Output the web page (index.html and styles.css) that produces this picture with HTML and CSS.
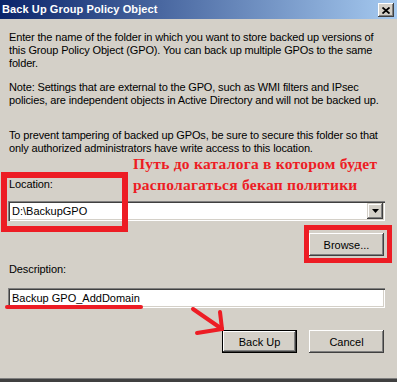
FILE: index.html
```html
<!DOCTYPE html>
<html>
<head>
<meta charset="utf-8">
<link rel="stylesheet" href="styles.css">
</head>
<body>
<div class="window">
  <div class="titlebar">
    <span class="title">Back Up Group Policy Object</span>
    <span class="close"><svg width="8" height="7" viewBox="0 0 8 7"><path d="M0.5 0.5 L7.5 6.5 M7.5 0.5 L0.5 6.5" stroke="#000" stroke-width="1.8" fill="none"/></svg></span>
  </div>
  <div class="content">
    <p class="para p1">Enter the name of the folder in which you want to store backed up versions of<br>this Group Policy Object (GPO). You can back up multiple GPOs to the same<br>folder.</p>
    <p class="para p2">Note: Settings that are external to the GPO, such as WMI filters and IPsec<br>policies, are independent objects in Active Directory and will not be backed up.</p>
    <p class="para p3">To prevent tampering of backed up GPOs, be sure to secure this folder so that<br>only authorized administrators have write access to this location.</p>
    <div class="label loc-label">Location:</div>
    <div class="field combo">
      <span class="field-text">D:\BackupGPO</span>
      <span class="drop"><svg width="7" height="4" viewBox="0 0 7 4"><path d="M0 0 H7 L3.5 4 Z" fill="#000"/></svg></span>
    </div>
    <div class="row browse-row"><button class="btn">Browse...</button></div>
    <div class="label desc-label">Description:</div>
    <div class="field desc"><span class="field-text">Backup GPO_AddDomain</span></div>
    <div class="row bottom-row">
      <button class="btn default">Back Up</button>
      <button class="btn">Cancel</button>
    </div>
  </div>

  <div class="note">Путь до каталога в котором будет<br>располагаться бекап политики</div>
  <div class="mark mark-location"></div>
  <div class="mark mark-browse"></div>
  <div class="underline"></div>
  <svg class="arrow" width="397" height="382" viewBox="0 0 397 382">
    <g stroke="#ed1c24" stroke-width="4" stroke-linecap="round" fill="none">
      <path d="M193 309 L222 329"/>
      <path d="M220 312 L222 329"/>
      <path d="M197 333 L222 329"/>
    </g>
  </svg>
</div>
</body>
</html>
```

FILE: styles.css
```css
* { box-sizing: border-box; }
html, body { margin: 0; padding: 0; }
body {
  width: 397px;
  height: 382px;
  overflow: hidden;
  background: #d4d0c8;
  font-family: "Liberation Sans", Arial, sans-serif;
  font-size: 11px;
  color: #000;
}
.window {
  position: relative;
  width: 397px;
  height: 382px;
  background: #d4d0c8;
  box-shadow: inset 0 -3px #404040, inset 0 -4px #808080;
}
.titlebar {
  height: 19px;
  display: flex;
  align-items: center;
  justify-content: space-between;
  padding: 0 3px 0 2px;
  background: linear-gradient(to right, #0a246a 0%, #a6caf0 100%);
}
.title {
  color: #fff;
  font-weight: bold;
  font-size: 11px;
  line-height: 19px;
  letter-spacing: 0.1px;
}
.close {
  width: 16px;
  height: 14px;
  margin-top: 1px;
  display: flex;
  align-items: center;
  justify-content: center;
  background: #d4d0c8;
  box-shadow: inset -1px -1px #404040, inset 1px 1px #fff, inset -2px -2px #808080;
}
.content {
  padding: 12px 12px 0 8px;
  display: flex;
  flex-direction: column;
}
.para {
  margin: 0;
  line-height: 13px;
  letter-spacing: -0.15px;
  padding-left: 1px;
}
.p2 { margin-top: 11px; }
.p3 { margin-top: 22px; }
.label {
  line-height: 13px;
  padding-left: 1px;
  letter-spacing: -0.1px;
}
.loc-label { margin-top: 23px; }
.desc-label { margin-top: 7px; }
.field {
  height: 20px;
  background: #fff;
  display: flex;
  align-items: center;
  justify-content: space-between;
  padding: 2px 2px 2px 4px;
  box-shadow: inset 1px 1px #808080, inset 2px 2px #404040, inset -1px -1px #fff, inset -2px -2px #d4d0c8;
}
.field-text { line-height: 16px; }
.combo { margin-top: 10px; }
.desc { margin-top: 12px; }
.drop {
  width: 16px;
  height: 16px;
  display: flex;
  align-items: center;
  justify-content: center;
  background: #d4d0c8;
  box-shadow: inset -1px -1px #404040, inset 1px 1px #d4d0c8, inset -2px -2px #808080, inset 2px 2px #fff;
}
.row {
  display: flex;
  justify-content: flex-end;
  gap: 12px;
  padding-right: 1px;
}
.browse-row { margin-top: 12px; }
.bottom-row { margin-top: 22px; }
.btn {
  width: 75px;
  height: 23px;
  padding: 0;
  margin: 0;
  border: none;
  background: #d4d0c8;
  font-family: "Liberation Sans", Arial, sans-serif;
  font-size: 11px;
  color: #000;
  box-shadow: inset -1px -1px #404040, inset 1px 1px #fff, inset -2px -2px #808080;
}
.btn.default {
  border: 1px solid #000;
  box-shadow: inset -1px -1px #404040, inset 1px 1px #fff, inset -2px -2px #808080;
}
.note {
  position: absolute;
  left: 133px;
  top: 153px;
  font-family: "Liberation Serif", "Times New Roman", serif;
  font-weight: bold;
  font-size: 15.5px;
  line-height: 21px;
  letter-spacing: 0.25px;
  color: #ed1c24;
  white-space: nowrap;
}
.mark {
  position: absolute;
  border: 6px solid #ed1c24;
}
.mark-location {
  left: 1px;
  top: 172px;
  width: 127px;
  height: 60px;
}
.mark-browse {
  left: 304px;
  top: 225px;
  width: 88px;
  height: 38px;
  border-width: 5px;
}
.underline {
  position: absolute;
  left: 5px;
  top: 305px;
  width: 138px;
  height: 4px;
  border-radius: 2px;
  background: #ed1c24;
}
.arrow {
  position: absolute;
  left: 0;
  top: 0;
  pointer-events: none;
}
```
